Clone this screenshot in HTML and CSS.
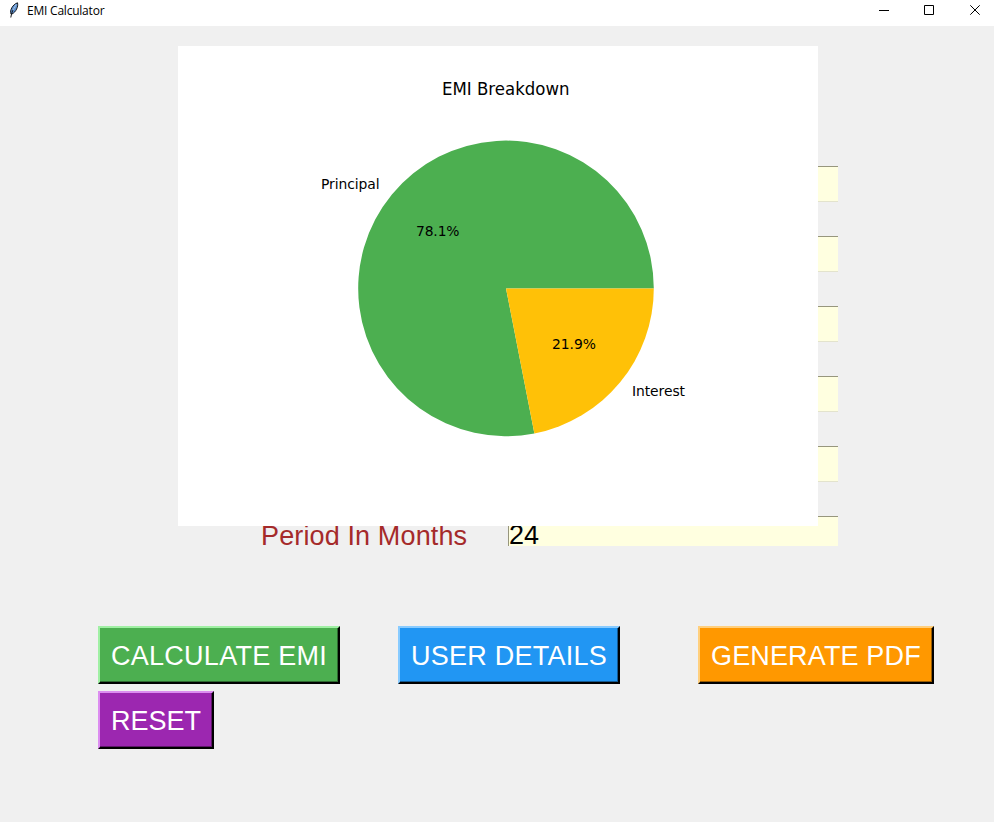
FILE: index.html
```html
<!DOCTYPE html>
<html lang="en">
<head>
<meta charset="utf-8">
<title>EMI Calculator</title>
<link rel="stylesheet" href="styles.css">
</head>
<body>
<header class="titlebar">
  <svg class="feather" width="12" height="18" viewBox="0 0 12 18">
    <path d="M3 13C1.500 9.500 4.500 3.500 9.500 1.800C10.500 5.500 8 11 4 13Z" fill="#5b8fd0" stroke="#15181d" stroke-width="1"/>
    <path d="M8 4.500C5.500 7.500 3.500 11 2.800 16.500" fill="none" stroke="#15181d" stroke-width="1"/>
    <path d="M8.300 3.500L5 9" stroke="#9cc4f2" stroke-width="1.300"/>
  </svg>
  <span class="caption">EMI Calculator</span>
  <svg class="controls" width="126" height="20" viewBox="0 0 126 20" fill="none" stroke="#000" stroke-width="1">
    <path d="M11 10.500H21"/>
    <path d="M56.500 5.500H65.500V14.500H56.500Z"/>
    <path d="M102.300 5.300L111.700 14.700M111.700 5.300L102.300 14.700"/>
  </svg>
</header>
<main class="window">
  <form class="loan-form">
    <div class="row"><label></label><div class="field"></div></div>
    <div class="row"><label></label><div class="field"></div></div>
    <div class="row"><label></label><div class="field"></div></div>
    <div class="row"><label></label><div class="field"></div></div>
    <div class="row"><label></label><div class="field"></div></div>
    <div class="row"><label>Period In Months</label><div class="field">24</div></div>
  </form>
  <div class="actions">
    <button class="calculate">CALCULATE EMI</button>
    <button class="details">USER DETAILS</button>
    <button class="pdf">GENERATE PDF</button>
    <button class="reset">RESET</button>
  </div>
  <svg class="chart" width="640" height="480" viewBox="0 0 640 480">
    <rect width="640" height="480" fill="#fff"/>
    <path d="M328 242.400H475.800A147.800 147.800 0 1 0 356.400 387.450Z" fill="#4caf50"/>
    <path d="M328 242.400L356.400 387.450A147.800 147.800 0 0 0 475.800 242.400Z" fill="#ffc107"/>
    <text class="chart-title" x="264" y="49" textLength="127.500" lengthAdjust="spacingAndGlyphs">EMI Breakdown</text>
    <text x="143" y="143" textLength="58.500">Principal</text>
    <text x="238" y="190" textLength="43.500">78.1%</text>
    <text x="374" y="303" textLength="44">21.9%</text>
    <text x="454" y="350" textLength="53">Interest</text>
  </svg>
</main>
</body>
</html>
```

FILE: styles.css
```css
* { box-sizing: border-box; }
body {
  margin: 0;
  height: 822px;
  overflow: hidden;
  background: #f0f0f0;
  font-family: "Liberation Sans", sans-serif;
}
.titlebar {
  display: flex;
  align-items: flex-start;
  height: 26px;
  padding-left: 8px;
  background: #fff;
}
.caption {
  margin-left: 7px;
  font: 12px/22px "Open Sans", sans-serif;
  letter-spacing: -0.22px;
  color: #000;
}
.feather { margin-top: 1px; }
.controls { margin-left: auto; }
.window { position: relative; height: 796px; }
.loan-form {
  height: 520px;
  padding-top: 140px;
  overflow: hidden;
}
.row {
  display: grid;
  grid-template-columns: 247px 330px;
  margin-left: 261px;
  height: 70px;
  font-size: 27px;
  line-height: 36px;
}
.row label { color: #a52a2a; white-space: nowrap; padding-top: 2px; letter-spacing: 0.13px; }
.field {
  height: 36px;
  border: 1px solid;
  border-color: #97967d #e3e3cd #e3e3cd #97967d;
  border-right: 0;
  background: #ffffe0;
  color: #000;
}
.actions {
  display: grid;
  grid-template-columns: repeat(3, 300px);
  gap: 7px 0;
  justify-items: start;
  margin: 80px 0 0 98px;
}
button {
  height: 58px;
  padding: 2px 0 0 11px;
  border: 2px solid;
  border-color: var(--light) #000 #000 var(--light);
  box-shadow: inset -1px -1px var(--dark);
  background: var(--face);
  color: #fff;
  font: 27px "Liberation Sans", sans-serif;
  text-align: left;
  white-space: nowrap;
}
.calculate { --face: #4caf50; --light: #a0f0a4; --dark: #2e6930; width: 242px; letter-spacing: 0.27px; }
.details { --face: #2196f3; --light: #88cbff; --dark: #145a92; width: 222px; letter-spacing: 0.25px; }
.pdf { --face: #ff9800; --light: #ffcf7d; --dark: #995b00; width: 236px; letter-spacing: 0.15px; }
.reset { --face: #9c27b0; --light: #dc8df0; --dark: #5e176a; width: 116px; }
.chart {
  position: absolute;
  left: 178px;
  top: 20px;
  font-family: "DejaVu Sans", sans-serif;
  font-size: 13.89px;
}
.chart-title { font-size: 17.4px; }
```
